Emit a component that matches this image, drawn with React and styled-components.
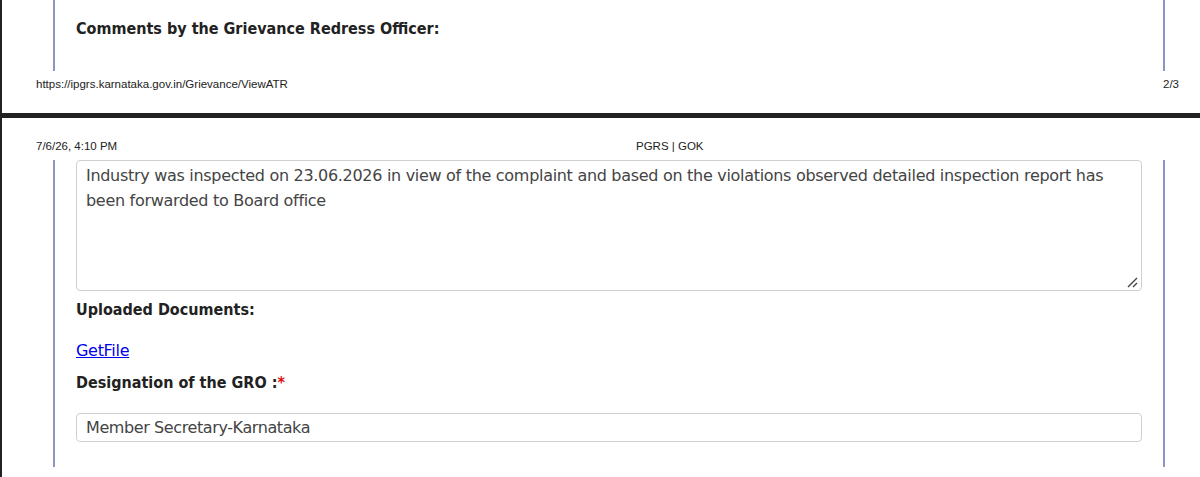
import React from "react";
import styled, { createGlobalStyle } from "styled-components";

const GlobalStyle = createGlobalStyle`
  html, body {
    margin: 0;
    padding: 0;
    background: #fff;
  }
  body {
    font-family: "DejaVu Sans", Verdana, sans-serif;
    color: #222;
  }
`;

const Sheet = styled.div`
  width: 1200px;
  height: 477px;
  overflow: hidden;
  background: #fff;
`;

const Page = styled.section`
  border-left: 2px solid #222;
  height: ${({ h }) => h}px;
  display: flex;
  flex-direction: column;
  overflow: hidden;
`;

const PageBreak = styled.div`
  height: 5px;
  background: #222;
`;

const PrintLine = styled.div`
  display: grid;
  grid-template-columns: ${({ cols }) => cols};
  align-items: center;
  box-sizing: border-box;
  height: ${({ h }) => h}px;
  padding: ${({ pt }) => pt || 0}px 0 0 34px;
  font-family: "Liberation Sans", Arial, sans-serif;
  font-size: 11.5px;
  color: #222;
`;

const Panel = styled.div`
  margin-left: 51px;
  width: 1112px;
  box-sizing: border-box;
  border-left: 2px solid #8c95c4;
  border-right: 2px solid #8c95c4;
  padding: ${({ pad }) => pad};
  height: ${({ h }) => h}px;
  display: flex;
  flex-direction: column;
`;

const Heading = styled.h4`
  margin: 0;
  font-family: "DejaVu Sans Condensed", "DejaVu Sans", Verdana, sans-serif;
  font-size: 16px;
  font-weight: bold;
  line-height: 24px;
  color: #222;
  margin-top: ${({ mt }) => mt || 0}px;
`;

const Required = styled.span`
  color: #e01010;
`;

const Comment = styled.div`
  height: 131px;
  box-sizing: border-box;
  border: 1px solid #d0d0d0;
  border-radius: 4px;
  padding: 2px 30px 2px 9px;
  font-size: 16px;
  letter-spacing: -0.3px;
  line-height: 25px;
  color: #444;
  position: relative;
`;

const Grip = styled.svg`
  position: absolute;
  right: 3px;
  bottom: 2px;
`;

const FileLink = styled.a`
  margin-top: 17px;
  align-self: flex-start;
  font-size: 16px;
  letter-spacing: -0.3px;
  line-height: 24px;
  color: #0000ee;
  text-decoration: underline;
`;

const Field = styled.div`
  margin-top: 18px;
  height: 29px;
  box-sizing: border-box;
  border: 1px solid #d0d0d0;
  border-radius: 4px;
  padding: 0 9px;
  display: flex;
  align-items: center;
  font-size: 16px;
  letter-spacing: -0.4px;
  color: #444;
`;

export default function App() {
  return (
    <Sheet>
      <GlobalStyle />
      <Page h={113}>
        <Panel h={71} pad="17px 21px 0">
          <Heading>Comments by the Grievance Redress Officer:</Heading>
        </Panel>
        <PrintLine h={26} cols="1127px auto">
          <span>https://ipgrs.karnataka.gov.in/Grievance/ViewATR</span>
          <span>2/3</span>
        </PrintLine>
      </Page>
      <PageBreak />
      <Page h={359}>
        <PrintLine h={42} pt={14} cols="600px auto">
          <span>7/6/26, 4:10 PM</span>
          <span>PGRS | GOK</span>
        </PrintLine>
        <Panel h={307} pad="0 21px">
          <Comment>
            Industry was inspected on 23.06.2026 in view of the complaint and based on the violations observed detailed inspection report has been forwarded to Board office
            <Grip width="12" height="12" viewBox="0 0 12 12">
              <path d="M11 2 L2 11 M11 7 L7 11" stroke="#444" strokeWidth="1.4" fill="none" />
            </Grip>
          </Comment>
          <Heading mt={7}>Uploaded Documents:</Heading>
          <FileLink href="#">GetFile</FileLink>
          <Heading mt={8}>
            Designation of the GRO :<Required>*</Required>
          </Heading>
          <Field>Member Secretary-Karnataka</Field>
        </Panel>
      </Page>
    </Sheet>
  );
}
